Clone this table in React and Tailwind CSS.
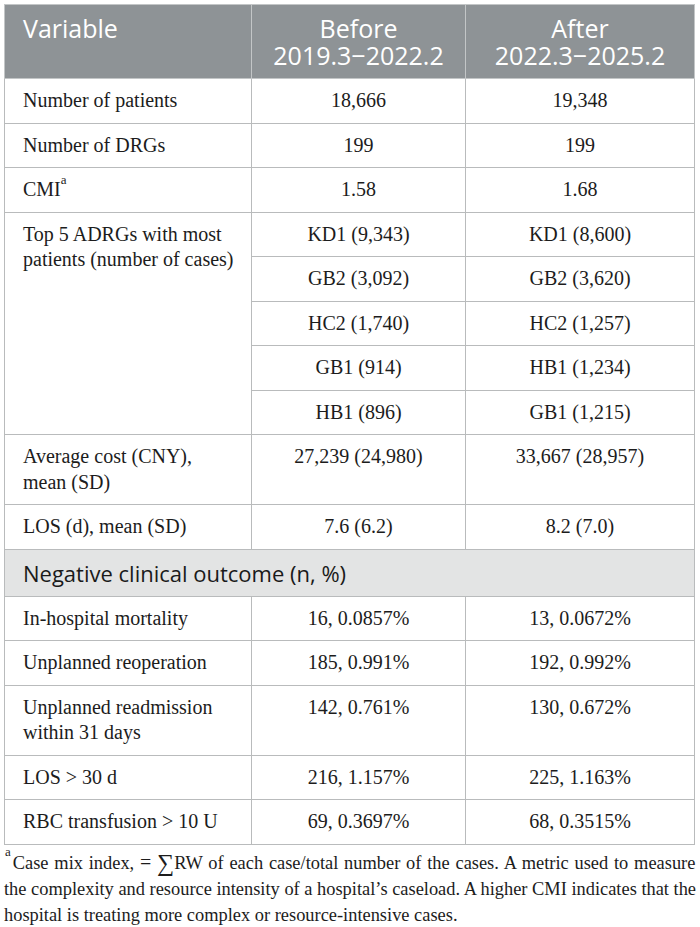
const serif = "font-['Liberation_Serif',serif]";

function Cell({ children, center = false, rowSpan }) {
  return (
    <td
      rowSpan={rowSpan}
      className={
        "border border-[#b9bbbc] px-[18px] py-[9px] align-top whitespace-nowrap " +
        (center ? "text-center" : "text-left")
      }
    >
      {children}
    </td>
  );
}

function Row({ label, a, b }) {
  return (
    <tr>
      <Cell>{label}</Cell>
      <Cell center>{a}</Cell>
      <Cell center>{b}</Cell>
    </tr>
  );
}

export default function App() {
  return (
    <div className={"bg-white w-[700px] h-[927px] pt-[4px] pl-[4px] text-[#1c1c1c] " + serif}>
      <table className="table-fixed border-collapse w-[691px]">
        <colgroup>
          <col className="w-[247px]" />
          <col className="w-[214px]" />
          <col />
        </colgroup>
        <thead>
          <tr className="bg-[#8e9396] text-white font-['Open_Sans',sans-serif] text-[25px] leading-[27px]">
            <th className="border border-[#c3c6c7] text-left align-top font-normal pl-[18px] pt-[10px] pb-[9px]">
              Variable
            </th>
            <th className="border border-[#c3c6c7] text-center align-top font-normal pt-[10px] pb-[9px]">
              Before
              <br />
              2019.3−2022.2
            </th>
            <th className="border border-[#c3c6c7] text-center align-top font-normal pt-[10px] pb-[9px]">
              After
              <br />
              2022.3−2025.2
            </th>
          </tr>
        </thead>
        <tbody className="text-[20px] leading-[25.5px]">
          <Row label="Number of patients" a="18,666" b="19,348" />
          <Row label="Number of DRGs" a="199" b="199" />
          <Row
            label={
              <>
                CMI<sup className="text-[13px] align-[6px]">a</sup>
              </>
            }
            a="1.58"
            b="1.68"
          />
          <tr>
            <Cell rowSpan={5}>
              Top 5 ADRGs with most
              <br />
              patients (number of cases)
            </Cell>
            <Cell center>KD1 (9,343)</Cell>
            <Cell center>KD1 (8,600)</Cell>
          </tr>
          <tr>
            <Cell center>GB2 (3,092)</Cell>
            <Cell center>GB2 (3,620)</Cell>
          </tr>
          <tr>
            <Cell center>HC2 (1,740)</Cell>
            <Cell center>HC2 (1,257)</Cell>
          </tr>
          <tr>
            <Cell center>GB1 (914)</Cell>
            <Cell center>HB1 (1,234)</Cell>
          </tr>
          <tr>
            <Cell center>HB1 (896)</Cell>
            <Cell center>GB1 (1,215)</Cell>
          </tr>
          <Row
            label={
              <>
                Average cost (CNY),
                <br />
                mean (SD)
              </>
            }
            a="27,239 (24,980)"
            b="33,667 (28,957)"
          />
          <Row label="LOS (d), mean (SD)" a="7.6 (6.2)" b="8.2 (7.0)" />
          <tr className="bg-[#e3e4e4]">
            <td
              colSpan={3}
              className="border border-[#b9bbbc] px-[18px] pt-[10px] pb-[10px] font-['Open_Sans',sans-serif] text-[22px] leading-[26px] text-[#1a1a1a]"
            >
              Negative clinical outcome (n, %)
            </td>
          </tr>
          <Row label="In-hospital mortality" a="16, 0.0857%" b="13, 0.0672%" />
          <Row label="Unplanned reoperation" a="185, 0.991%" b="192, 0.992%" />
          <Row
            label={
              <>
                Unplanned readmission
                <br />
                within 31 days
              </>
            }
            a="142, 0.761%"
            b="130, 0.672%"
          />
          <Row label="LOS > 30 d" a="216, 1.157%" b="225, 1.163%" />
          <Row label="RBC transfusion > 10 U" a="69, 0.3697%" b="68, 0.3515%" />
        </tbody>
      </table>
      <div className="mt-[4px] text-[18.4px] leading-[26px] whitespace-nowrap">
        <div className="[word-spacing:1.2px]">
          <sup className="text-[13px] align-[6px] ml-[1px] mr-[2px]">a</sup>Case mix index, <span className="text-[20px]">=</span>{" "}
          <span className="text-[24px] leading-[10px] align-[-2px]">∑</span>RW of each case/total number of the cases. A metric used to measure
        </div>
        <div>the complexity and resource intensity of a hospital’s caseload. A higher CMI indicates that the</div>
        <div>hospital is treating more complex or resource-intensive cases.</div>
      </div>
    </div>
  );
}
